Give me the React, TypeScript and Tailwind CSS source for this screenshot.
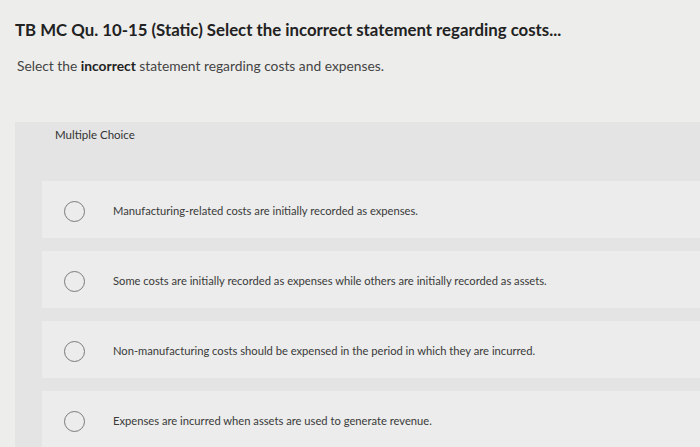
import React from "react";

const choices = [
  "Manufacturing-related costs are initially recorded as expenses.",
  "Some costs are initially recorded as expenses while others are initially recorded as assets.",
  "Non-manufacturing costs should be expensed in the period in which they are incurred.",
  "Expenses are incurred when assets are used to generate revenue.",
];

export default function App() {
  return (
    <div className="w-[700px] h-[447px] overflow-hidden bg-[#ededeb] text-[#2a2a2a] font-['Lato',sans-serif]">
      {/* Header */}
      <h1 className="pl-[15px] pt-[19px] text-[16.8px] font-bold leading-[22px] text-[#222]">
        TB MC Qu. 10-15 (Static) Select the incorrect statement regarding costs...
      </h1>
      <p className="pl-[17px] mt-[16px] text-[13.8px] leading-[18px] text-[#444]">
        Select the <span className="font-bold text-[#222]">incorrect</span> statement regarding costs and expenses.
      </p>

      {/* Question panel */}
      <div className="ml-[15px] mt-[47px] bg-[#e3e4e3] pt-[5px] pb-[8px]">
        <div className="pl-[40px] text-[11.5px] leading-[16px] text-[#333]">Multiple Choice</div>
        <div className="mt-[38px] flex flex-col gap-[13px]">
          {choices.map((c) => (
            <div key={c} className="ml-[27px] h-[57px] bg-[#ebeceb] flex items-center pt-[3px]">
              <span className="ml-[22px] w-[21px] h-[21px] rounded-full border-[1.5px] border-[#7a7a7a] shrink-0" />
              <span className="ml-[28px] text-[11.2px] text-[#3a3a3a]">{c}</span>
            </div>
          ))}
        </div>
      </div>
    </div>
  );
}
